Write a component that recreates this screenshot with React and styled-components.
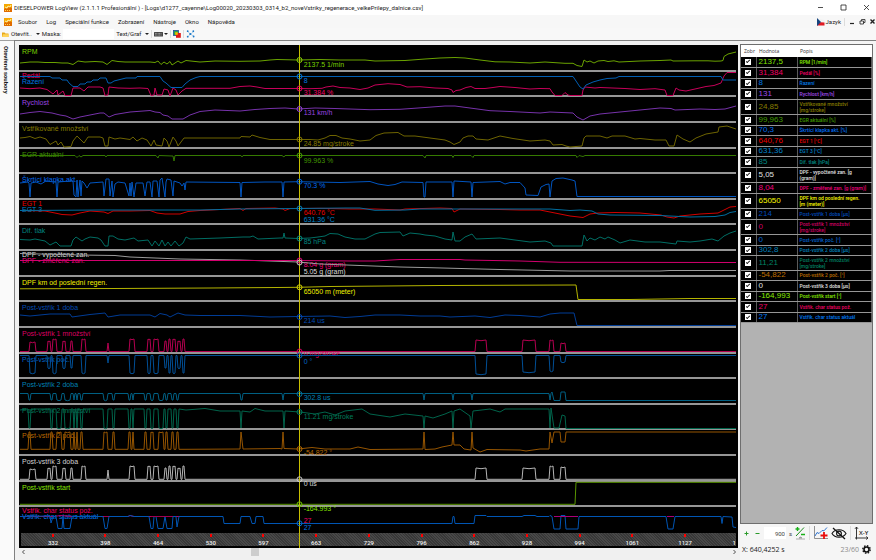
import React from "react";
import styled, { createGlobalStyle } from "styled-components";

const ui = 'Roboto, "Noto Sans", sans-serif';
const wide = '"Open Sans", "Noto Sans", sans-serif';
const plain = '"Liberation Sans", Arial, sans-serif';

const GlobalStyle = createGlobalStyle`
  *, *::before, *::after { box-sizing: border-box; }
  html, body { margin: 0; padding: 0; background: #f8f8f8; }
  body { font-family: ${ui}; font-size: 6px; color: #1c1c1c; }
  button, input { font: inherit; color: inherit; margin: 0; padding: 0; border: 0; background: none; }
`;

/* ---------- chart data ---------- */

// Square-ish pulses leaving a base level: [start, end, level]
const pulses = (x0, base, list, tail = "") => {
  const parts = [`${x0},${base}`];
  list.forEach(([a, b, level]) => {
    parts.push(`${a},${base}`, `${a + 1},${level}`);
    if (b - a > 3) parts.push(`${(a + b) / 2},${level + 0.7}`);
    parts.push(`${b - 1},${level}`, `${b},${base}`);
  });
  return `${parts.join(" ")} ${tail}`;
};

const post1 = (level, mid) => [
  [29, 36, level + (mid > 0 ? 3 : 0)],
  [47, 51, level + mid],
  [52, 57, level],
  [62, 66, level + mid],
  [70, 73, level + mid],
  [81, 86, level],
  [107, 109, level + mid * 2],
  [129, 135, level],
  [147, 151, level],
  [153, 159, level],
  [164, 167, level + mid],
  [168, 171, level],
  [172, 176, level],
  [177, 181, level + mid],
  [182, 185, level],
];

const LATE_POST1 = [[475, 487], [522, 536], [549, 554], [560, 566]];
const late = (levels) => LATE_POST1.map(([a, b], i) => [a, b, levels[i]]);

const post2 = (level) => [
  [28, 31, level],
  [50, 53, level],
  [56, 62, level],
  [64, 71, level],
  [73, 75, level],
  [76, 78, level],
  [80, 83, level],
  [103, 108, level],
  [112, 115, level],
  [128, 131, level],
  [132, 134, level],
  [144, 147, level],
  [150, 154, level],
  [158, 164, level],
  [165, 168, level],
  [171, 174, level],
  [176, 179, level],
  [240, 243, level],
  [282, 284, level],
  [423, 425, level],
  [452, 454, level],
  [471, 473, level],
  [549, 551, level],
];

const CURVES = [
  ["#6aa300", "20,63 30,62 38,62 45,62.5 55,62.5 62,63 68,63 73,64.5 78,61 85,62 95,61.5 103,62 107,64.5 112,60.5 118,61.5 125,62 150,62 155,62.5 158,61 161,64.5 164,62 167,64 170,61.5 172,65 178,61 181,63 186,60.5 200,62 215,61 240,61.3 260,61 270,60 277,59.5 298,60 320,59.5 340,60 365,60 375,61 405,60.5 425,59 440,58 455,57.5 465,58 480,60 495,61.8 510,62 530,63 545,62 565,63.3 573,63.3 577,65.5 582,66.5 584,60 587,62 590,61 594,63 598,61 604,60.5 608,61.5 614,60.8 619,62 640,61 660,60.5 671,60 673,61 695,60.8 708,60.8 715,61.2 721,61 723,60.5 724,56.5 728,54 732,53 736,52"],
  ["#c8005a", "20,88 30,88.7 40,88 47,89.5 53,94 57,90 58,95 63,91 65,95.5 71,95.5 73,88 80,88 84,91 88,87 100,87 103,88 105,95.5 108,95 109,87 118,88 130,88.3 140,88 148,88.5 151,95.5 154,95 155,88 157,95 162,95 164,89 168,90 170,96 173,88 176,90 178,95 182,91 186,88.3 230,88.3 240,86.5 250,86 257,87 265,88.5 298,88.5 310,88.7 322,88.3 326,87 333,86 340,87.5 350,88 360,89.5 368,88 375,85 388,83.7 400,84.5 407,87 420,86.7 435,88 448,88.5 452,90 453,92.5 456,90.5 460,90 466,87.5 471,86.5 475,88.5 485,88.5 493,87.5 500,86.5 515,87.5 530,89 540,88.5 550,88.7 552,92 555,95.5 562,95.5 565,92.5 568,95 570,95.5 582,95.5 583,90 585,87 595,88 600,87.5 625,88.5 640,89.5 655,88.7 665,90 667,95.5 673,95.5 676,88 679,90 686,91 695,89 706,86.5 714,85.5 721,83 724,76 727,72.5 736,72.5"],
  ["#005fb4", "20,76.5 50,76.5 52,78 60,78 62,80 67,80 69,83 73,86.5 78,86.5 80,84 85,84 87,82 91,82 93,80 98,80 100,78 106,78 108,83 111,83 114,81 118,80 126,78 136,78 137,76.5 160,76.5 163,81 166,83 171,87.5 182,87.5 185,84 190,80 196,77.5 200,76.5 573,76.5 576,81 580,87 583,89 586,85 593,82 600,80 607,78.5 616,78 619,76.5 721,76.5 723,80 736,80"],
  ["#7632aa", "20,114 30,112.5 40,111.5 52,113 60,115 66,116 73,119 80,117 90,115 100,113 104,113 109,117 115,114.5 130,112 150,110.5 155,112 160,112.5 163,115 168,116 172,119 183,119 190,115 200,111.5 215,110 240,111 255,109.5 270,108.5 285,108 298,109 315,108 335,108.5 370,109.7 400,109.3 425,107.5 445,106 455,106 470,108 490,110.7 510,111.5 540,113 550,112 573,113 577,117 583,120 590,116 600,114 620,112 640,110 660,108 671,108.5 675,110 700,109 715,109.5 725,109 736,106"],
  ["#6e6400", "20,138 25,137.5 30,136.5 35,138.5 40,137 46,139 50,144.5 56,141 58,145 61,142 64,147 71,146.5 73,141 77,136 80,139 84,143 88,137 100,137 103,138 105,146 108,146 109,137 115,139 120,138 130,139.5 133,137 137,141 142,138 147,140 151,146 154,140 156,145 162,146 164,138 167,141 169,147 173,137 176,141 178,146 181,142 184,138 240,138 241,136.5 250,137 252,135 260,137.5 270,139.5 298,139.5 310,139.5 318,140 325,138 330,135.5 336,135.5 342,138 350,139 360,141 370,140 376,135.5 384,133 398,132.5 404,136 415,136 430,138 445,140 450,142 454,144.5 460,142 463,138 468,136 473,136 476,139 488,140 500,136 513,138.5 530,141 545,140 550,141 553,145 562,144.5 566,146 570,147 582,146 584,138 586,136 600,136 607,138 612,136 625,136 635,139 640,138.5 655,140 666,140 669,146 674,146 677,135 683,139 690,142 696,138 706,134 718,132 719,127 727,126 736,129"],
  ["#357a00", "20,155.5 75,155.5 77,157.5 79,155.5 81,157 83,155.5 105,155.5 106,157 107,155.5 156,155.5 158,158 159,155.5 173,156 174,161 175,155.5 241,155.5 242,157 243,155.5 282,155.5 284,157 285,155.5 423,155.5 425,158 426,155.5 452,155.5 453,157.5 454,155.5 471,155.5 473,157.5 474,155.5 576,155.5 577,157.5 579,155.5 583,156.5 585,155.5 736,155.5"],
  ["#0055c0", "20,183 28,182 29,183 30,197 31,183 36,182 41,184 46,181 54,182 56,182 57,197 58,182 70,181 73,181 74,195 76,197 77,180 78,197 80,180 81,196 82,181 84,183 87,188 90,183 103,182 104,196 106,179 109,179 110,196 112,181 113,197 115,184 118,182 125,183 129,196 130,183 131,196 132,182 134,197 136,183 143,183 145,196 147,182 150,182 152,197 153,181 157,181 159,197 160,180 162,178 165,197 166,182 167,179 171,180 173,196 174,181 180,183 182,186 184,183 185,190 186,182 240,182.5 241,197 242,182.5 265,182 282,182 283,197 284,182 298,181.7 340,182.5 370,181.5 378,184 388,185.5 395,184.5 402,182 423,182.5 424,197 425,197 426,182 452,182 453,197 454,181 471,182 472,197 473,182.5 500,181.5 505,184 510,182.5 520,182.5 525,188 526,195 538,195.5 541,187 546,184.5 549,184 550,197 552,181 556,178.5 563,178 572,180 575,181 577,196.5 736,196.5"],
  ["#d20000", "20,210.5 45,211 55,213 62,214.5 72,215 80,213 90,211 104,212 108,213.5 113,211 130,211 150,210.5 157,213 165,214 180,214 188,211.5 200,210.5 230,209 240,208.5 243,210.5 246,208.5 275,208 283,209 285,210.5 290,208.5 320,208.3 350,209 375,209 400,210 405,209 440,208 452,208.5 454,212 460,209 500,209.5 520,210 540,210 555,213 570,216 583,217.5 590,214 598,213 615,212.5 640,213 661,215 667,217 674,218 680,216 685,215.5 700,214 718,213 724,210 730,207 736,206.5"],
  ["#006ea0", "20,210.5 100,210 200,210 240,209 298,208.5 345,208 360,208 375,210.3 405,210 420,209 500,209 550,209 570,210.5 580,210 592,211 598,214 610,215 660,215.5 690,217 715,216.5 725,215 730,212.5 736,211.5"],
  ["#006e64", "20,239.5 30,240 35,239 45,241 50,245 56,242 60,246 71,246 73,240 76,237 82,241 85,239 90,237 98,238 101,240 105,246 108,246 109,236 113,236 118,239 125,240 134,238 138,241 148,240 152,246 155,241 159,246 162,240 165,246 168,242 171,246 175,241 179,246 183,243 186,237 190,239 220,238 243,237 250,237 253,236 258,239 280,238 283,238 284,233 285,238 298,238.5 310,238 318,237 325,236 330,233.5 338,234 345,237 355,239 365,239 375,234 380,232.5 400,232 403,236 410,233 420,234 425,235 435,236 445,239 452,240 453,232 455,241 460,241 465,237 472,234 476,239 500,238 515,240 530,242 545,241 551,243 553,246 582,246 584,235 587,241 590,238 595,240 600,237 605,239 608,237 615,240 620,243 630,240 645,242 660,242 676,244 677,241 690,242 700,241 712,239 718,241 724,236 730,233 736,231"],
  ["#9b9b9b", "20,253.5 80,255 115,255.5 130,257 180,259 240,260 298,262 320,264 360,265.5 400,267 430,267.7 500,269.5 570,271 660,271 670,270.5 736,270.5"],
  ["#d2006e", "20,260.5 298,260.5 350,261 375,261 400,259.5 460,259.5 465,260 520,261 560,262.3 736,262.5"],
  ["#b4b400", "20,288.8 115,288.5 210,288 277,287.5 298,287.3 330,286.5 440,285.5 576,285 578,299.5 630,299.5 690,298.5 736,298.5"],
  ["#003c96", "20,315 30,316 50,314 70,314 72,317 90,314.5 105,313 108,317 120,315 150,315 155,317 160,313.5 167,315 170,317 178,313 185,315 200,315.5 240,315.5 270,317 298,316.5 330,316 345,317.5 360,316.5 375,315 400,315 420,316 440,316 450,317 475,316 490,317.5 505,315 520,315.5 540,317 550,314 560,313 574,313 577,325.5 736,325.5"],
  ["#b40050", pulses(20, 351.5, [...post1(339, 2), ...late([340, 340, 340, 343])], "736,351.5")],
  ["#004f96", pulses(20, 355.5, [...post1(373, -5), ...late([374, 372, 371, 362])], "736,355.5")],
  ["#005f82", pulses(20, 393.5, post2(400), "552,392 554,400.5 560,400.5 561,392 565,392 566,400.5 736,400.5")],
  ["#00644b", `20,410 ${pulses(27, 409, post2(428).slice(0, 17))} 186,410 205,408.5 220,411 240,411 241,428 242,411 250,412 255,408.5 265,411 283,411 284,428 285,411 300,412 315,414 325,412 335,415 345,411 362,409 370,414 390,417 405,414 423,416 424,428 425,416 433,418 445,414 452,411 453,428 454,411 460,409 470,416 471,428 473,411 490,409 500,412 505,409 540,409 549,409 550,428 551,408 554,428 559,428 562,415 565,416 566,428.5 736,428.5`],
  ["#965500", pulses(20, 449.3, post2(432).slice(0, 17), "185,449.3 240,449 241,432 243,449 280,448.5 282,449 283,432 284,448.5 298,449 312,447.5 325,449 350,449 358,447 370,449.5 423,449 424,432 425,449.5 435,449 442,447 452,445 453,432 454,445 460,445 464,449 471,450 472,432 473,448 480,452 487,449.5 520,450 526,451 540,449 549,449 550,432 552,443 554,432 560,432 561,442 565,442 566,432 736,432")],
  ["#b4b4b4", pulses(20, 479.3, [...post1(466, 2), ...late([468, 468, 466, 467])], "736,479.3")],
  ["#5a9600", "20,504.3 575,504.3 576,482.3 736,482.3"],
  ["#b40064", "20,516.5 55,516.5 60,515.5 72,516.5 104,516.5 128,516.5 130,515.5 134,516.5 223,516.5"],
  ["#0055b4", "20,516.5 50,516 51,523 53,516.5 56,516.5 58,528.5 62,528.5 63,516 64,528.5 70,528.5 72,516.5 103,516.5 105,528.5 107,528.5 109,516.5 128,516.5 130,515.5 134,516.5 149,516.5 151,528.5 153,528.5 154,516.5 156,516.5 158,528.5 163,528.5 165,516.5 167,528.5 172,528.5 173,516.5 176,516.5 177,527 179,516.5 223,516.5 224,523.5 240,523.5 241,516.5 250,516.5 252,523.5 255,523.5 256,516.5 263,516.5 264,523.5 452,523.5 453,516.5 454,516.5 455,523.5 474,523.5 475,515.5 486,515.5 487,516.5 522,516.5 524,515.5 535,515.5 537,516.5 549,516.5 550,515.5 552,516.5 554,529 560,529 561,515.5 565,515.5 566,529 578,529 579,516.5 666,516.5 668,529 673,529 675,516.5 721,516.5 722,523.5 723,516.5 732,517 733,527 736,527.5"],
];

const OVERLAY = [
  ["#aa0078", "554,516.5 578,516.5"],
  ["#aa0078", "667,516.5 674,516.5"],
  ["#a00050", "104,516.5 108,516.5"],
  ["#a00050", "151,516.5 173,516.5"],
];

const MARKS = [
  [60, "#8cd200"], [76.5, "#0078dc"], [88.5, "#e6005a"], [109, "#9646dc"], [139.5, "#8c7d00"],
  [155.5, "#46a000"], [181.7, "#0064dc"], [208.5, "#0082be"], [238.5, "#008c82"], [260.5, "#e6007d"],
  [262.5, "#c8c8c8"], [287.3, "#d2d200"], [317, "#0046b4"], [351.5, "#d2005f"], [355.5, "#0064b4"],
  [394, "#0073a0"], [412, "#007d5f"], [449, "#b46900"], [479.3, "#c8c8c8"], [504.3, "#73c800"], [523.3, "#0069d2"],
];

const CRIMSON = "#f00064";

const BANDS = [
  { names: [["RPM", "#7ad200"]], values: [["2137.5 1/min", "#7ad200", 15]] },
  { names: [["Pedál", CRIMSON], ["Řazení", "#0078e1"]], values: [["8", "#0078e1", 5], ["31.384 %", CRIMSON, 17]] },
  { names: [["Rychlost", "#9b46e1"]], values: [["131 km/h", "#9b46e1", 12]] },
  { names: [["Vstřikované množství", "#877d00"]], values: [["24.85 mg/stroke", "#877d00", 17]] },
  { names: [["EGR aktuální", "#419600"]], values: [["99.963 %", "#419600", 8]] },
  { names: [["Škrtící klapka akt.", "#006ef5"]], values: [["70.3 %", "#006ef5", 8]] },
  { names: [["EGT 1", "#eb0000"], ["EGT 3", "#0082c8"]], values: [["640.76 °C", "#eb0000", 9], ["631.36 °C", "#0082c8", 16]] },
  { names: [["Dif. tlak", "#008782"]], values: [["85 hPa", "#008782", 13]] },
  { names: [["DPF - vypočtené zan.", "#dcdcdc"], ["DPF - změřené zan.", "#f0007d"]], values: [["8.04 g (gram)", "#f0007d", 10], ["5.05 g (gram)", "#dcdcdc", 17]] },
  { names: [["DPF km od poslední regen.", "#f0f000"]], values: [["65050 m (meter)", "#f0f000", 11]] },
  { names: [["Post-vstřik 1 doba", "#004bb4"]], values: [["214 us", "#004bb4", 15]] },
  { names: [["Post-vstřik 1 množství", "#dc0064"]], values: [["0 mg/stroke", "#dc0064", 22]] },
  { names: [["Post-vstřik poč.", "#0064c8"]], values: [["0 °", "#0064c8", 4]] },
  { names: [["Post-vstřik 2 doba", "#0082b4"]], values: [["302.8 us", "#0082b4", 15]] },
  { names: [["Post-vstřik 2 množství", "#007d5a"]], values: [["11.21 mg/stroke", "#007d5a", 8]] },
  { names: [["Post-vstřik 2 poč.", "#b96900"]], values: [["-54.822 °", "#b96900", 19]] },
  { names: [["Post-vstřik 3 doba", "#d2d2d2"]], values: [["0 us", "#d2d2d2", 24]] },
  { names: [["Post-vstřik start", "#87e600"]], values: [["-164.993 °", "#87e600", 23]] },
  { names: [["Vstřik. char status pož.", CRIMSON], ["Vstřik. char status aktuál", "#0078f0"]], values: [["27", CRIMSON, 10], ["27", "#0078f0", 17]] },
];

const TICKS = ["332", "398", "464", "530", "597", "663", "729", "796", "862", "928", "994", "1061", "1127", "1"];

const ROWS = [
  ["2137,5", "RPM [1/min]", "#82e600"],
  ["31,384", "Pedál [%]", CRIMSON],
  ["8", "Řazení", "#0078e1"],
  ["131", "Rychlost [km/h]", "#a04beb"],
  ["24,85", "Vstřikované množství\n[mg/stroke]", "#877d00"],
  ["99,963", "EGR aktuální [%]", "#419b00"],
  ["70,3", "Škrtící klapka akt. [%]", "#006ef5"],
  ["640,76", "EGT 1 [°C]", "#eb0000"],
  ["631,36", "EGT 3 [°C]", "#0082c8"],
  ["85", "Dif. tlak [hPa]", "#008782"],
  ["5,05", "DPF - vypočtené zan. [g\n(gram)]", "#e1e1e1"],
  ["8,04", "DPF - změřené zan. [g (gram)]", "#f0007d"],
  ["65050", "DPF km od poslední regen.\n[m (meter)]", "#fafa00"],
  ["214", "Post-vstřik 1 doba [µs]", "#004bbe"],
  ["0", "Post-vstřik 1 množství\n[mg/stroke]", "#d20064"],
  ["0", "Post-vstřik poč. [°]", "#0064d2"],
  ["302,8", "Post-vstřik 2 doba [µs]", "#0082be"],
  ["11,21", "Post-vstřik 2 množství\n[mg/stroke]", "#008264"],
  ["-54,822", "Post-vstřik 2 poč. [°]", "#be6e00"],
  ["0", "Post-vstřik 3 doba [µs]", "#e1e1e1"],
  ["-164,993", "Post-vstřik start [°]", "#87eb00"],
  ["27", "Vstřik. char status pož.", CRIMSON],
  ["27", "Vstřik. char status aktuál", "#007df5"],
];

/* ---------- window chrome ---------- */

const Window = styled.div`
  display: flex;
  flex-direction: column;
  height: 100vh;
  min-height: 540px;
  background: #f8f8f8;
`;

const TitleBar = styled.header`
  display: flex;
  align-items: center;
  gap: 2px;
  height: 15px;
  padding: 0 6px 0 4px;
  background: #fff;
  white-space: nowrap;
`;

const TitleText = styled.h1`
  margin: 0;
  flex: 1;
  font: 400 6px/8px ${ui};
  overflow: hidden;
`;

const WindowControls = styled.div`
  display: flex;
  align-items: center;
  gap: ${(p) => p.$gap}px;
`;

const IconButton = styled.button`
  display: grid;
  place-items: center;
  flex: none;
  min-width: ${(p) => p.$w || 8}px;
  height: ${(p) => p.$h || 10}px;
`;

const MenuBar = styled.nav`
  display: flex;
  align-items: center;
  height: 13px;
  padding: 0 0 0 4px;
  background: #f7f7f7;
`;

const MenuItems = styled.div`
  display: flex;
  flex: 1;
  gap: 9px;
  padding-left: 6px;
`;

const TextButton = styled.button`
  display: flex;
  align-items: center;
  gap: ${(p) => p.$gap || 2}px;
  font-size: 6px;
  line-height: 8px;
  white-space: nowrap;
`;

const ToolBar = styled.div`
  display: flex;
  align-items: center;
  height: 12px;
  padding: 0 2px;
  background: #f8f8f8;
  line-height: 8px;
`;

const MaskField = styled.label`
  display: flex;
  align-items: center;
  gap: 2px;
  margin: 0 2px;
`;

const MaskInput = styled.input`
  width: 51px;
  height: 10px;
  background: #fff;
`;

const Caret = styled.span`
  border: 2px solid transparent;
  border-top-color: #222;
  border-bottom: 0;
  margin-left: ${(p) => p.$space || 0}px;
`;

const Separator = styled.span`
  width: 1px;
  height: ${(p) => p.$h || 8}px;
  margin: 0 ${(p) => p.$m}px;
  background: #dcdcdc;
`;

const Body = styled.div`
  display: grid;
  grid-template-columns: 14px minmax(0, 1fr) 136px;
  flex: 1;
  min-height: 0;
`;

const SideTab = styled.aside`
  padding-top: 5px;
  border-top: 1px solid #a0a0a0;
  background: #fafafa;
`;

const SideTabButton = styled.button`
  writing-mode: vertical-rl;
  width: 12px;
  font: 700 6px/12px ${ui};
`;

/* ---------- plot ---------- */

const PlotColumn = styled.main`
  display: flex;
  flex-direction: column;
  min-width: 0;
  padding: 4px 2px 0 4px;
  border-left: 1px solid #808080;
  border-top: 1px solid #808080;
  background: #f0f0f0;
`;

const Plot = styled.section`
  position: relative;
  display: flex;
  flex-direction: column;
  flex: 1;
  min-height: 0;
  padding: 1px 2px 0 0;
  background: #000;
`;

const Bands = styled.div`
  display: grid;
  grid-template-rows: repeat(19, minmax(0, 1fr));
  flex: 1;
  min-height: 0;
`;

const Band = styled.div`
  position: relative;
  padding: ${(p) => (p.$pair ? 1 : 3)}px 0 0 3px;
  border-bottom: 2px solid #969696;
  &:last-child { border-bottom: 0; }
`;

const SeriesName = styled.div`
  color: ${(p) => p.$color};
  font: 400 7px/6px ${plain};
  white-space: nowrap;
`;

const CursorValue = styled.output`
  position: absolute;
  left: 39%;
  padding-left: 5px;
  top: ${(p) => p.$top}px;
  color: ${(p) => p.$color};
  font: 400 7px/8px ${plain};
  white-space: nowrap;
`;

const CurveLayer = styled.svg`
  position: absolute;
  inset: 0;
  width: 100%;
  height: 100%;
  pointer-events: none;
  polyline, line, circle { fill: none; vector-effect: non-scaling-stroke; }
`;

const Axis = styled.div`
  display: flex;
  height: 15px;
  padding-bottom: 2px;
`;

const AxisStrip = styled.div`
  display: grid;
  grid-template-columns: 580fr repeat(12, 527fr) 246fr;
  flex: 1;
  margin-left: 2px;
  background: repeating-linear-gradient(45deg, #383838 0 1px, #484848 1px 2px);
  overflow: hidden;
`;

const Tick = styled.div`
  display: flex;
  flex-direction: column;
  align-items: center;
  justify-content: space-between;
  color: #f0f0f0;
  font: 500 6px/7px ${ui};
  &:first-child { padding-left: 6px; }
  &:last-child { align-items: flex-end; }
  &::before {
    content: "";
    width: 2px;
    height: 3px;
    margin-top: 1px;
    background: #ff0000;
  }
  &:last-child::before { visibility: hidden; }
`;

const ScrollBar = styled.div`
  display: grid;
  grid-template-columns: 8px 225fr 8px 474fr 8px;
  height: 12px;
  align-items: start;
`;

const ScrollThumb = styled.div`
  grid-column: 3;
  height: 8px;
  background: #cdcdcd;
`;

/* ---------- value list ---------- */

const Panel = styled.aside`
  display: flex;
  flex-direction: column;
  padding: 3px 3px 0 0;
  border-top: 1px solid #808080;
  background: #f5f5f5;
`;

const TableBox = styled.div`
  flex: 1;
  min-height: 0;
  overflow: hidden;
  border: 1px solid #6e6e6e;
  background: #b2b2b2;
`;

const Table = styled.table`
  width: 100%;
  border-collapse: collapse;
  table-layout: fixed;
  font-family: ${plain};
`;

const Head = styled.th`
  width: ${(p) => (p.$w ? `${p.$w}px` : "auto")};
  height: 12px;
  padding: 0 0 0 3px;
  background: #fff;
  color: #333;
  font: 400 5px/8px ${wide};
  text-align: left;
  white-space: nowrap;
`;

const Row = styled.tr`
  height: ${(p) => (p.$tall ? 15 : 10)}px;
  &:nth-child(even) { height: ${(p) => (p.$tall ? 15 : 11)}px; }
  background: #000;
  color: ${(p) => p.$color};
`;

const Cell = styled.td`
  padding: 0 0 0 ${(p) => p.$pad || 1}px;
  border-bottom: 1px solid #969696;
  border-right: 1px solid #5a5a5a;
  font-size: ${(p) => (p.$big ? 8 : 5)}px;
  font-weight: ${(p) => (p.$big ? 400 : 500)};
  font-family: ${(p) => (p.$big ? plain : ui)};
  line-height: ${(p) => (p.$big ? 8 : 6)}px;
  vertical-align: middle;
  white-space: pre;
`;

const Check = styled.input`
  appearance: none;
  display: grid;
  place-items: center;
  width: 6px;
  height: 6px;
  background: #fff;
  &:checked::after {
    content: "";
    width: 4px;
    height: 2px;
    margin-bottom: 1px;
    border: solid #222;
    border-width: 0 0 1px 1px;
    transform: rotate(-45deg);
  }
`;

const PanelTools = styled.div`
  display: flex;
  align-items: center;
  gap: 3px;
  height: 18px;
  padding-left: 2px;
`;

const SecondsField = styled.label`
  display: flex;
  align-items: center;
  gap: 3px;
  color: #444;
`;

const SecondsInput = styled.input`
  width: 22px;
  height: 12px;
  padding-right: 1px;
  background: #fff;
  text-align: right;
`;

const StatusBar = styled.footer`
  display: flex;
  align-items: center;
  justify-content: space-between;
  height: 18px;
  padding: 0 2px 3px;
  font: 400 7px/10px ${wide};
`;

const StatusGroup = styled.div`
  display: flex;
  align-items: center;
  gap: 3px;
  color: ${(p) => p.$color};
`;

/* ---------- icons ---------- */

const AppIcon = () => (
  <svg width="8" height="8" viewBox="0 0 8 8" aria-hidden="true">
    <rect width="8" height="8" fill="#f5a800" />
    <path d="M0 8V5l2-1 1 1 2-2 3 1v4z" fill="#e06a00" />
    <path d="M1 3l2 1 1-2 2 1 1-2" stroke="#fff3b0" fill="none" />
    <path d="M1 6.500h6" stroke="#ffd84a" strokeDasharray="1 1" />
  </svg>
);

const FolderIcon = () => (
  <svg width="7" height="7" viewBox="0 0 7 7" aria-hidden="true">
    <path d="M0 1.500h2.500l1 1H6.500V6H0z" fill="#e8a818" />
    <path d="M0 6l1-2.800h6L6.200 6z" fill="#ffd45a" />
  </svg>
);

const KeyboardIcon = () => (
  <svg width="9" height="5" viewBox="0 0 9 5" aria-hidden="true">
    <rect width="9" height="4.500" rx=".5" fill="#444" />
    <path d="M1 1.400h7M1 3h7" stroke="#ddd" strokeWidth=".7" strokeDasharray=".8 .6" />
  </svg>
);

const ColorsIcon = () => (
  <svg width="8" height="8" viewBox="0 0 8 8" aria-hidden="true">
    <rect x=".4" y=".4" width="5" height="5" fill="#28a050" stroke="#234a9a" strokeWidth=".8" />
    <rect x="3" y="3" width="4.800" height="4.800" fill="#e01818" />
    <rect x="2.200" y="2.200" width="2.600" height="2.600" fill="#f0c000" />
  </svg>
);

const NetworkIcon = () => (
  <svg width="9" height="8" viewBox="0 0 9 8" aria-hidden="true">
    <path d="M4.500 4L1 1M4.500 4L8 1.500M4.500 4L1.500 7M4.500 4L8 6.500" stroke="#8fc2e6" strokeWidth=".7" />
    <g fill="#1a78c8">
      <circle cx="1.700" cy="1.200" r=".9" />
      <circle cx="7.300" cy="1.200" r=".9" />
      <circle cx="1.700" cy="6.700" r=".9" />
      <circle cx="7.600" cy="6.500" r=".9" />
      <circle cx="4.300" cy="4" r="1.100" />
    </g>
  </svg>
);

const CzechFlag = () => (
  <svg width="9" height="8" viewBox="0 0 9 8" aria-hidden="true">
    <path d="M1 .500L8.500 2v2.500L1 4z" fill="#f2f2f2" />
    <path d="M1 4l7.500.500V7.500L1 7.500z" fill="#e01a22" />
    <path d="M1 0l4 4-4 4z" fill="#17457e" />
  </svg>
);

const Glyph = ({ d, w = 7, h = 7, stroke = "#222", sw = 0.8 }) => (
  <svg width={w} height={h} viewBox={`0 0 ${w} ${h}`} aria-hidden="true">
    <path d={d} fill="none" stroke={stroke} strokeWidth={sw} />
  </svg>
);

const PlusMinusIcon = () => (
  <svg width="11" height="15" viewBox="0 0 11 15" aria-hidden="true">
    <path d="M1 10L9 1.500" stroke="#1c8c1c" strokeWidth="1" />
    <path d="M.500 3h4M2.500 1v4M6 8.500h4" stroke="#18b018" strokeWidth="1.400" />
    <path d="M1 13h9M4 12l1.500-1L7 12z" stroke="#999" fill="#999" strokeWidth=".8" />
  </svg>
);

const AddCurveIcon = () => (
  <svg width="15" height="14" viewBox="0 0 15 14" aria-hidden="true">
    <path d="M1.500 0v12.500H15" stroke="#777" fill="none" strokeWidth=".8" />
    <path d="M2 10l2-3.500 2 1L9 4.500l2 .300L14 1.500" stroke="#2f74d0" fill="none" strokeWidth="1" />
    <path d="M11 6v7M7.500 9.500h7" stroke="#e80c0c" strokeWidth="1.800" />
  </svg>
);

const HiddenIcon = () => (
  <svg width="16" height="13" viewBox="0 0 16 13" aria-hidden="true">
    <path d="M1 6.500C4 1.500 12 1.500 15 6.500C12 11.500 4 11.500 1 6.500z" fill="none" stroke="#111" strokeWidth="1.100" />
    <circle cx="8" cy="6.500" r="2.400" fill="none" stroke="#111" strokeWidth="1.100" />
    <path d="M2 1l12 11" stroke="#111" strokeWidth="1.300" />
  </svg>
);

const AxesArrows = styled.span`
  display: grid;
  align-items: center;
  & > * { grid-area: 1 / 1; }
`;

const AxesText = styled.span`
  padding: 0 0 1px 4px;
  font: 600 6px/8px ${wide};
`;

const AxesIcon = () => (
  <AxesArrows>
    <svg width="15" height="14" viewBox="0 0 15 14" aria-hidden="true">
      <path d="M2.500 1v11H14M1 2.800L2.500 1 4 2.800M12.200 10.500L14 12l-1.800 1.500M1 12h1.500v1.500" fill="none" stroke="#222" strokeWidth=".9" />
    </svg>
    <AxesText>X-Y</AxesText>
  </AxesArrows>
);

const GearIcon = () => (
  <svg width="9" height="9" viewBox="0 0 9 9" aria-hidden="true">
    <circle cx="4.500" cy="4.500" r="2.500" fill="none" stroke="#111" strokeWidth="1.600" />
    <circle cx="4.500" cy="4.500" r="3.700" fill="none" stroke="#111" strokeWidth="1.400" strokeDasharray="1.500 1.400" />
  </svg>
);

/* ---------- page ---------- */

const MENU = ["Soubor", "Log", "Speciální funkce", "Zobrazení", "Nástroje", "Okno", "Nápověda"];

const Curves = () => (
  <CurveLayer viewBox="19 45 719 503" preserveAspectRatio="none" aria-hidden="true">
    {CURVES.map(([color, points], i) => (
      <polyline key={i} points={points} stroke={color} />
    ))}
    {OVERLAY.map(([color, points]) => (
      <polyline key={points} points={points} stroke={color} />
    ))}
    <line x1="299.500" x2="299.500" y1="45" y2="548" stroke="#c8be00" />
    {MARKS.map(([y, color]) => (
      <circle key={y} cx="299.500" cy={y} r="2.500" stroke={color} />
    ))}
  </CurveLayer>
);

const Chart = () => (
  <Plot aria-label="Graf">
    <Bands>
      {BANDS.map((band) => (
        <Band key={band.names[0][0]} $pair={band.names.length > 1}>
          {band.names.map(([name, color]) => (
            <SeriesName key={name} $color={color}>{name}</SeriesName>
          ))}
          {band.values.map(([text, color, top]) => (
            <CursorValue key={color} $color={color} $top={top}>{text}</CursorValue>
          ))}
        </Band>
      ))}
    </Bands>
    <Axis>
      <AxisStrip>
        {TICKS.map((t) => <Tick key={t}>{t}</Tick>)}
      </AxisStrip>
    </Axis>
    <Curves />
  </Plot>
);

const ValueTable = () => (
  <TableBox>
    <Table>
      <thead>
        <tr>
          <Head $w={15}>Zobr</Head>
          <Head $w={41}>Hodnota</Head>
          <Head>Popis</Head>
        </tr>
      </thead>
      <tbody>
        {ROWS.map(([value, label, color]) => (
          <Row key={label} $color={color} $tall={label.includes("\n")}>
            <Cell $pad={4}><Check type="checkbox" defaultChecked aria-label={label} /></Cell>
            <Cell $big $pad={2}>{value}</Cell>
            <Cell $pad={2}>{label}</Cell>
          </Row>
        ))}
      </tbody>
    </Table>
  </TableBox>
);

export default function App() {
  return (
    <Window>
      <GlobalStyle />
      <TitleBar>
        <AppIcon />
        <TitleText>
          {"DIESELPOWER LogView (2.1.1.1 Profesionální ) - [Logs\\d1277_cayenne\\Log00020_20230303_0314_b2_noveVstriky_regenerace_velkePrilepy_dalnice.csv]"}
        </TitleText>
        <WindowControls $gap={15}>
          <IconButton aria-label="Minimalizovat"><Glyph d="M1 3.500h5" /></IconButton>
          <IconButton aria-label="Maximalizovat"><Glyph d="M1 1h5v5H1z" /></IconButton>
          <IconButton aria-label="Zavřít"><Glyph d="M1 1l5 5M6 1L1 6" /></IconButton>
        </WindowControls>
      </TitleBar>
      <MenuBar>
        <AppIcon />
        <MenuItems>
          {MENU.map((m) => <TextButton key={m}>{m}</TextButton>)}
        </MenuItems>
        <TextButton $gap={1}><CzechFlag />Jazyk</TextButton>
        <Separator $m={3} />
        <WindowControls $gap={2}>
          <IconButton aria-label="Minimalizovat okno"><Glyph d="M1 5.500h4" sw={1.2} /></IconButton>
          <IconButton aria-label="Obnovit okno"><Glyph d="M1 3h3.500v3H1zM2.500 3V1.500H6v3H4.500" /></IconButton>
          <IconButton aria-label="Zavřít okno"><Glyph d="M1.500 1.500l4 4M5.500 1.500l-4 4" sw={1.4} /></IconButton>
        </WindowControls>
      </MenuBar>
      <ToolBar>
        <TextButton><FolderIcon />Otevřít..<Caret $space={2} /></TextButton>
        <MaskField>Maska:<MaskInput type="text" /></MaskField>
        <TextButton>Text/Graf<Caret $space={2} /></TextButton>
        <Separator $m={2} />
        <TextButton $gap={1} aria-label="Klávesnice"><KeyboardIcon /><Caret /></TextButton>
        <Separator $m={2} />
        <IconButton aria-label="Barvy"><ColorsIcon /></IconButton>
        <Separator $m={2} />
        <IconButton aria-label="Síť"><NetworkIcon /></IconButton>
      </ToolBar>
      <Body>
        <SideTab>
          <SideTabButton>Otevřené soubory</SideTabButton>
        </SideTab>
        <PlotColumn>
          <Chart />
          <ScrollBar>
            <IconButton $h={8} aria-label="Posunout vlevo"><Glyph w={5} h={6} d="M3.500 1l-2 2 2 2" /></IconButton>
            <ScrollThumb />
            <span />
            <IconButton $h={8} aria-label="Posunout vpravo"><Glyph w={5} h={6} d="M1.500 1l2 2-2 2" /></IconButton>
          </ScrollBar>
        </PlotColumn>
        <Panel>
          <ValueTable />
          <PanelTools>
            <IconButton aria-label="Přidat"><Glyph w={5} h={5} d="M.500 2.500h4M2.500.500v4" stroke="#2a9a2a" sw={1} /></IconButton>
            <IconButton aria-label="Odebrat"><Glyph w={5} h={5} d="M.500 2.500h4" stroke="#2a9a2a" sw={1} /></IconButton>
            <SecondsField><SecondsInput type="text" defaultValue="900" />s</SecondsField>
            <IconButton $w={11} $h={15} aria-label="Plus minus"><PlusMinusIcon /></IconButton>
            <Separator $m={0} $h={14} />
            <IconButton $w={15} $h={14} aria-label="Přidat křivku"><AddCurveIcon /></IconButton>
            <IconButton $w={16} $h={13} aria-label="Skrýt"><HiddenIcon /></IconButton>
            <Separator $m={0} $h={14} />
            <IconButton $w={15} $h={14} aria-label="Osy X-Y"><AxesIcon /></IconButton>
          </PanelTools>
          <StatusBar>
            <StatusGroup $color="#222">X: 640,4252 s</StatusGroup>
            <StatusGroup $color="#8c8c8c">
              23/60
              <IconButton $w={9} aria-label="Nastavení"><GearIcon /></IconButton>
            </StatusGroup>
          </StatusBar>
        </Panel>
      </Body>
    </Window>
  );
}
